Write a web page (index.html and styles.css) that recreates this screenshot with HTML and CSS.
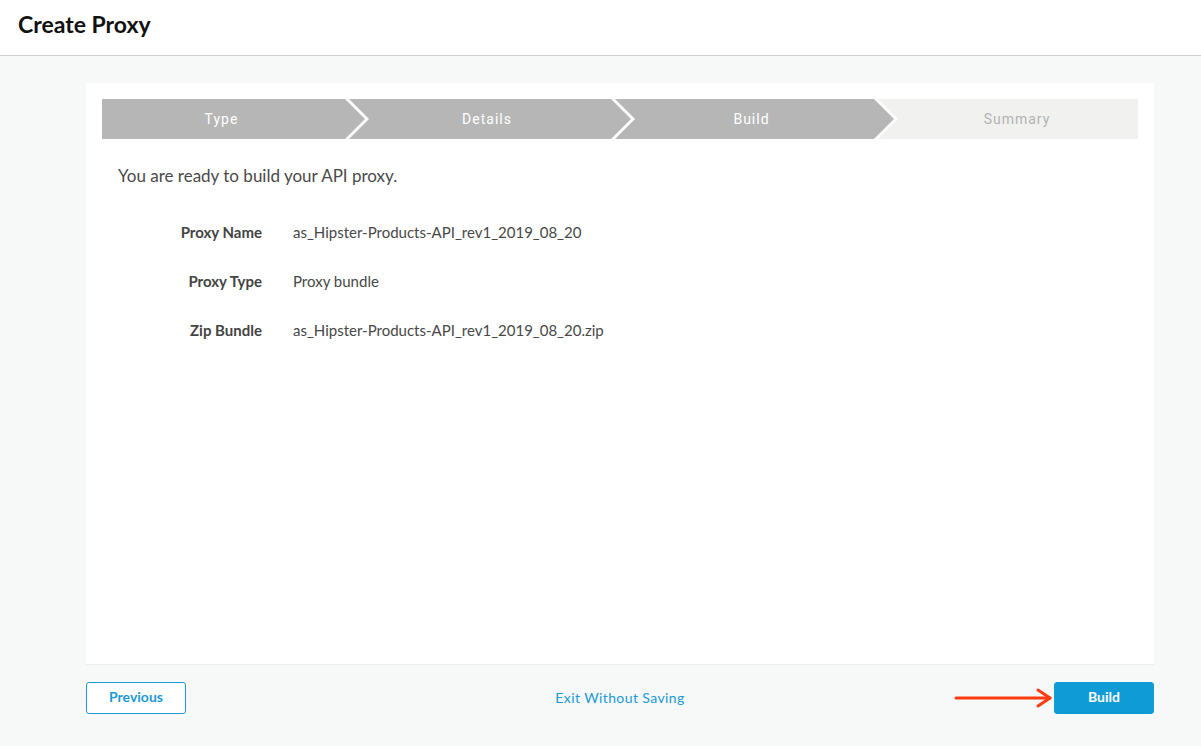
FILE: index.html
```html
<!DOCTYPE html>
<html lang="en">
<head>
<meta charset="utf-8">
<title>Create Proxy</title>
<link rel="stylesheet" href="styles.css">
</head>
<body>
<header class="topbar">
  <h1 class="title">Create Proxy</h1>
</header>
<main class="page">
  <section class="card">
    <ol class="steps">
      <li class="step step-first done">Type</li>
      <li class="step step-mid done">Details</li>
      <li class="step step-mid2 done">Build</li>
      <li class="step step-last">Summary</li>
    </ol>
    <p class="intro">You are ready to build your API proxy.</p>
    <dl class="details">
      <div class="row"><dt>Proxy Name</dt><dd>as_Hipster-Products-API_rev1_2019_08_20</dd></div>
      <div class="row"><dt>Proxy Type</dt><dd>Proxy bundle</dd></div>
      <div class="row"><dt>Zip Bundle</dt><dd>as_Hipster-Products-API_rev1_2019_08_20.zip</dd></div>
    </dl>
  </section>
  <footer class="actions">
    <button class="btn btn-outline">Previous</button>
    <a class="exit" href="#">Exit Without Saving</a>
    <div class="build-wrap">
      <svg class="arrow" width="100" height="24" viewBox="0 0 100 24">
        <line x1="2" y1="12" x2="96" y2="12" stroke="#ff3c10" stroke-width="3" stroke-linecap="round"/>
        <polyline points="84,4 96,12 84,20" fill="none" stroke="#ff3c10" stroke-width="3" stroke-linecap="round" stroke-linejoin="round"/>
      </svg>
      <button class="btn btn-primary">Build</button>
    </div>
  </footer>
</main>
</body>
</html>
```

FILE: styles.css
```css
* { box-sizing: border-box; }
html, body { margin: 0; padding: 0; }
body {
  background: #f7f8f8;
  font-family: Lato, "Open Sans", Arial, sans-serif;
  color: #444;
  width: 1201px;
  height: 746px;
  overflow: hidden;
}
.topbar {
  height: 56px;
  background: #fff;
  border-bottom: 1px solid #cfcfcf;
  padding: 0 18px;
  display: flex;
  align-items: center;
}
.title {
  margin: 0;
  font-size: 23px;
  font-weight: 700;
  color: #111;
  padding-bottom: 8px;
}
.page {
  padding: 27px 47px 0 86px;
}
.card {
  background: #fff;
  height: 582px;
  padding: 16px;
  border-bottom: 1px solid #ececec;
}
.steps {
  list-style: none;
  margin: 0;
  padding: 0;
  display: flex;
  height: 40px;
}
.step {
  height: 40px;
  display: flex;
  align-items: center;
  justify-content: center;
  font-family: Roboto, Arial, sans-serif;
  font-weight: 400;
  font-size: 14px;
  letter-spacing: 1px;
  color: #b3b3b3;
  background: #f1f1ef;
  margin-left: -16px;
}
.step.done { background: #b6b6b6; color: #fff; }
.step-first {
  margin-left: 0;
  flex: 0 0 263px;
  padding-right: 24px;
  clip-path: polygon(0 0, calc(100% - 20px) 0, 100% 50%, calc(100% - 20px) 100%, 0 100%);
}
.step-mid, .step-mid2 {
  padding: 0 26px 0 20px;
  clip-path: polygon(0 0, calc(100% - 20px) 0, 100% 50%, calc(100% - 20px) 100%, 0 100%, 20px 50%);
}
.step-mid { flex: 0 0 282px; }
.step-mid2 { flex: 0 0 279px; }
.step-last {
  flex: 1 1 auto;
  padding-left: 18px;
  clip-path: polygon(0 0, 100% 0, 100% 100%, 0 100%, 20px 50%);
}
.intro {
  margin: 26px 0 0 16px;
  font-size: 17px;
  line-height: 22px;
  color: #4a4a4a;
}
.details {
  margin: 20px 0 0 0;
}
.row {
  display: flex;
  align-items: center;
  height: 49px;
}
.details dt {
  width: 160px;
  text-align: right;
  font-weight: 700;
  font-size: 15px;
  color: #444;
}
.details dd {
  margin: 0 0 0 31px;
  font-size: 15px;
  color: #484848;
}
.actions {
  display: flex;
  justify-content: space-between;
  align-items: center;
  margin-top: 17px;
  height: 32px;
}
.btn {
  width: 100px;
  height: 32px;
  border-radius: 3px;
  font-family: Lato, Arial, sans-serif;
  font-size: 14px;
  font-weight: 700;
  padding: 0 0 3px 0;
  cursor: pointer;
}
.btn-outline {
  background: #fff;
  border: 1px solid #1a9ad6;
  color: #1a9ad6;
}
.btn-primary {
  background: #0f9bd5;
  border: 1px solid #0f9bd5;
  color: #fff;
}
.exit {
  color: #1a9ad6;
  text-decoration: none;
  font-size: 14px;
  letter-spacing: 0.4px;
  padding-bottom: 1px;
}
.build-wrap {
  position: relative;
  width: 100px;
}
.arrow {
  position: absolute;
  right: 100px;
  top: 4px;
}
```
